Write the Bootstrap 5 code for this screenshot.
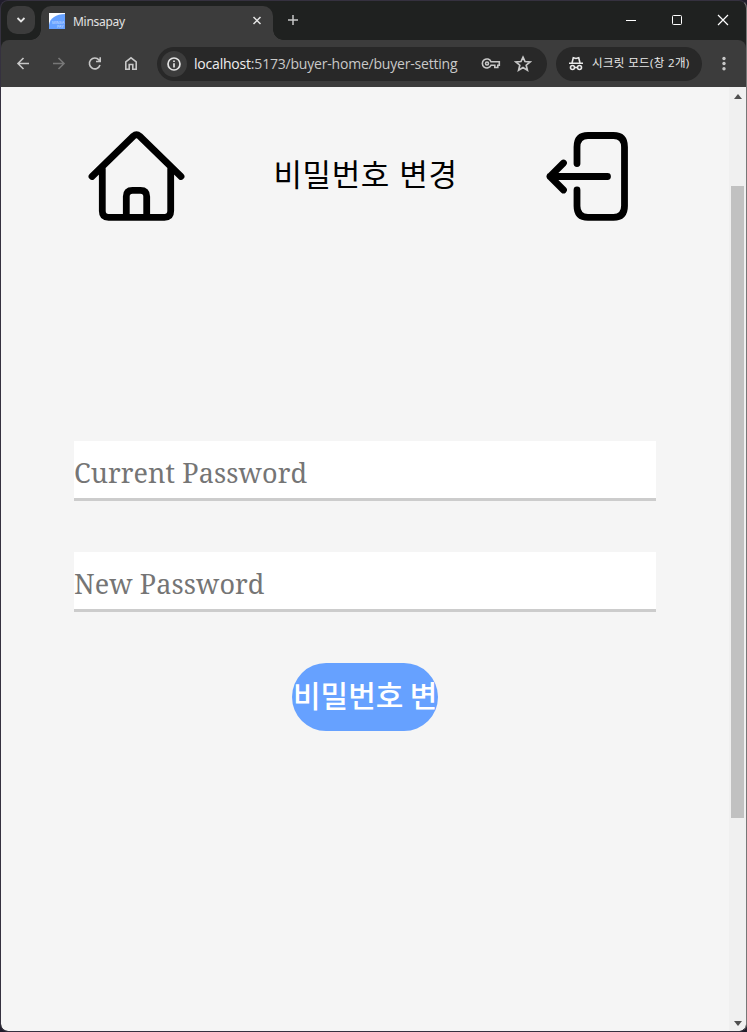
<!DOCTYPE html>
<html lang="ko">
<head>
<meta charset="utf-8">
<meta name="viewport" content="width=device-width, initial-scale=1">
<title>Minsapay</title>
<link href="https://cdn.jsdelivr.net/npm/bootstrap@5.3.0/dist/css/bootstrap.min.css" rel="stylesheet">
<style>
body{background:#201d2b;font-family:"Open Sans","Noto Sans CJK KR",sans-serif;height:1032px;width:747px;overflow:hidden}
svg{display:block;flex:none}
.window{height:1032px;border:1px solid #35313f;border-right-color:#777;border-radius:8px;background:#1f2120}
.titlebar{height:39px;padding-left:6px;color:#e3e3e3}
.tab-search{width:28px;height:28px;border-radius:10px;background:#3c3c3c;margin:5px 6px 0 0}
.tab-item{width:232px;height:34px;margin-top:5px;background:#3c3c3c;border-radius:10px 10px 0 0;padding:0 11px 4px 8px;font-size:12px}
.tab-item::before,.tab-item::after{content:"";position:absolute;bottom:0;width:10px;height:10px}
.tab-item::before{left:-10px;background:radial-gradient(circle at 0 0,transparent 9.5px,#3c3c3c 10px)}
.tab-item::after{right:-10px;background:radial-gradient(circle at 100% 0,transparent 9.5px,#3c3c3c 10px)}
.tab-title{margin:1px 0 0 8px;font-family:"Noto Sans",sans-serif;font-size:12px;letter-spacing:-.3px}
.window-btn{width:46px;height:38px}
.toolbar{height:47px;background:#3c3c3c;border-radius:8px 8px 0 0;padding-left:14px;color:#c7c7c7}
.nav-icons{gap:20px;width:142px}
.address{width:390px;height:34px;border-radius:17px;background:#282828;padding:0 15px 0 4px}
.info-chip{width:26px;height:26px;border-radius:50%;background:#3c3c3c}
.url{font-size:14px;margin:-1px 0 0 7px;color:#c9c9c9;letter-spacing:-.2px;white-space:nowrap}
.url b{font-weight:400;color:#eee}
.incognito{width:146px;height:34px;border-radius:17px;background:#282828;margin-left:9px;padding-left:12px;color:#e8e8e8;font-size:11.5px;white-space:nowrap}
.incognito span{margin:-2px 0 0 8px;letter-spacing:.35px}
.page{height:944px;background:#f5f5f5;border-radius:0 0 7px 7px}
.page-main{width:728px;padding:43px 73px 0}
.page-header{height:92px;padding:0 27px 0 14px}
.page-title{font:400 31px/40px "Noto Sans CJK KR",sans-serif;color:#000;letter-spacing:.6px;margin:-6px 0 0 1px}
.fields{margin-top:219px;gap:51px}
.pw-input{height:60px;border:0;border-bottom:3px solid #ccc;border-radius:0;padding:6px 0 0;background:#fff;font:27px "Noto Serif","DejaVu Serif",serif;letter-spacing:.1px}
.pw-input::placeholder{color:#757575;opacity:1}
.submit-btn{width:146px;height:68px;border:0;border-radius:34px;background:#66a1ff!important;color:#fff!important;font:500 30px/58px "Noto Sans CJK KR",sans-serif;margin-top:51px;padding:0 0 6px 1px;overflow:hidden;white-space:nowrap;text-align:left;word-spacing:-2px}
.scroll-track{width:17px;background:#f0f0f0;padding:7px 2px 5px;border-radius:0 0 7px 0}
.scroll-thumb{width:13px;height:632px;background:#c1c1c1;margin-top:87px}
</style>
</head>
<body>
<div class="window overflow-hidden">
  <header class="titlebar d-flex">
    <div class="tab-search d-flex align-items-center justify-content-center">
      <svg width="10" height="8" fill="none" stroke="currentColor" stroke-width="1.8"><path d="m1.500 2 3.500 3.500L8.500 2"/></svg>
    </div>
    <div class="tab-item position-relative d-flex align-items-center">
      <svg width="16" height="16"><rect width="16" height="16" fill="#fff"/><path d="M0 16v-4C1 5 7 1 16 1v15z" fill="#66a1ff"/><text x="3" y="10.500" font-size="3.800" font-family="Inter" fill="#c9dfff">MINSA</text><text x="8" y="14.800" font-size="3.600" font-family="Inter" fill="#c9dfff">PAY</text></svg>
      <span class="tab-title">Minsapay</span>
      <svg class="ms-auto" width="10" height="10" stroke="currentColor" stroke-width="1.500"><path d="m1.500 1 7 7m0-7-7 7"/></svg>
    </div>
    <svg style="margin:13px 0 0 14px" width="12" height="12" stroke="#c7c7c7" stroke-width="1.500"><path d="M6 1v10M1 6h10"/></svg>
    <div class="d-flex ms-auto">
      <div class="window-btn d-flex align-items-center justify-content-center"><svg width="12" height="12" stroke="#fff"><path d="M1 6.500h10"/></svg></div>
      <div class="window-btn d-flex align-items-center justify-content-center"><svg width="12" height="12" fill="none" stroke="#fff"><rect x="1.500" y="1.500" width="9" height="9" rx="1"/></svg></div>
      <div class="window-btn d-flex align-items-center justify-content-center"><svg width="12" height="12" stroke="#fff" stroke-width="1.200"><path d="m1 1 10 10m0-10L1 11"/></svg></div>
    </div>
  </header>
  <nav class="toolbar d-flex align-items-center">
    <div class="nav-icons d-flex">
      <svg width="16" height="16" fill="none" stroke="currentColor" stroke-width="1.600"><path d="M14 7.500H3M8.500 2 3 7.500 8.500 13"/></svg>
      <svg width="16" height="16" fill="none" stroke="#777" stroke-width="1.600"><path d="M2 7.500h11M7.500 2 13 7.500 7.500 13"/></svg>
      <svg width="16" height="16" fill="none" stroke="currentColor" stroke-width="1.600"><path d="M13 9A5.400 5.400 0 1 1 12 4L13.200 5.500M13.200 1.300V5.500H9"/></svg>
      <svg width="16" height="16" fill="none" stroke="currentColor" stroke-width="1.600"><path d="M2.800 13.300V5.800L8 1.800l5.200 4V13.300H9.800V8.500H6.200V13.300z"/></svg>
    </div>
    <div class="address d-flex align-items-center">
      <div class="info-chip d-flex align-items-center justify-content-center"><svg width="14" height="14" fill="none" stroke="#e3e3e3" stroke-width="1.700"><circle cx="7" cy="7" r="6"/><path d="M7 6.200V10.500M7 3.500V5"/></svg></div>
      <span class="url"><b>localhost</b>:5173/buyer-home/buyer-setting</span>
      <svg class="ms-auto" width="20" height="14" fill="none" stroke="currentColor" stroke-width="1.600"><path d="M10 4.700h8.300v3.500h-1.500v2.300h-3V8.200H10A4.500 4.500 0 1 1 10 4.700z"/><circle cx="6" cy="6.500" r="1.500"/></svg>
      <svg style="margin-left:13px" width="18" height="18" fill="none" stroke="currentColor" stroke-width="1.700"><path d="m9 2.200 2 4.300 5.100.4-3.900 3.300 1.200 5L9 12.500l-4.400 2.700 1.200-5-3.900-3.300L7 6.500z"/></svg>
    </div>
    <div class="incognito d-flex align-items-center">
      <svg width="16" height="16" fill="none" stroke="currentColor" stroke-width="1.600"><path d="M1 7.300h14M6.500 11.500h3"/><path d="M4 7 5.300 1.800 8 2.500l2.700-.7L12 7"/><circle cx="4.500" cy="11.500" r="2"/><circle cx="11.500" cy="11.500" r="2"/></svg>
      <span>시크릿 모드(창 2개)</span>
    </div>
    <svg style="margin-left:20px" width="4" height="16" fill="currentColor"><circle cx="2" cy="2.500" r="1.700"/><circle cx="2" cy="7.500" r="1.700"/><circle cx="2" cy="12.800" r="1.700"/></svg>
  </nav>
  <div class="page d-flex overflow-hidden">
    <main class="page-main">
      <div class="page-header d-flex align-items-center justify-content-between">
        <svg width="97" height="92" fill="none" stroke="#000" stroke-width="6.800" stroke-linecap="round" stroke-linejoin="round"><path d="M4 46.500 45.500 6Q48.500 3.400 51.500 6L93 46.500M14.300 38.500V81Q14.300 87.300 20.500 87.300H76.500Q82.700 87.300 82.700 81V38.500M38.300 87V66.500Q38.300 60.300 44.500 60.300H52.500Q58.700 60.300 58.700 66.500V87"/></svg>
        <h1 class="page-title">비밀번호 변경</h1>
        <svg width="84" height="92" fill="none" stroke="#000" stroke-width="6.800" stroke-linecap="round" stroke-linejoin="round"><path d="M32 33.500V17Q32 5.500 43 5.500H68.500Q79.500 5.500 79.500 17V76Q79.500 87.300 68.500 87.300H43Q32 87.300 32 76V60M62.500 46.500H5M18.500 33 5 46.500 18.500 60"/></svg>
      </div>
      <form class="d-flex flex-column align-items-center">
        <div class="fields d-flex flex-column w-100">
          <input class="pw-input form-control" type="password" placeholder="Current Password" aria-label="Current Password">
          <input class="pw-input form-control" type="password" placeholder="New Password" aria-label="New Password">
        </div>
        <button type="button" class="submit-btn btn">비밀번호 변경</button>
      </form>
    </main>
    <div class="scroll-track d-flex flex-column align-items-center">
      <svg width="8" height="5" fill="#505050"><path d="M0 5 4 0l4 5z"/></svg>
      <div class="scroll-thumb"></div>
      <svg class="mt-auto" width="8" height="5" fill="#505050"><path d="m0 0 4 5 4-5z"/></svg>
    </div>
  </div>
</div>
<script src="https://cdn.jsdelivr.net/npm/bootstrap@5.3.0/dist/js/bootstrap.bundle.min.js"></script>
</body>
</html>
